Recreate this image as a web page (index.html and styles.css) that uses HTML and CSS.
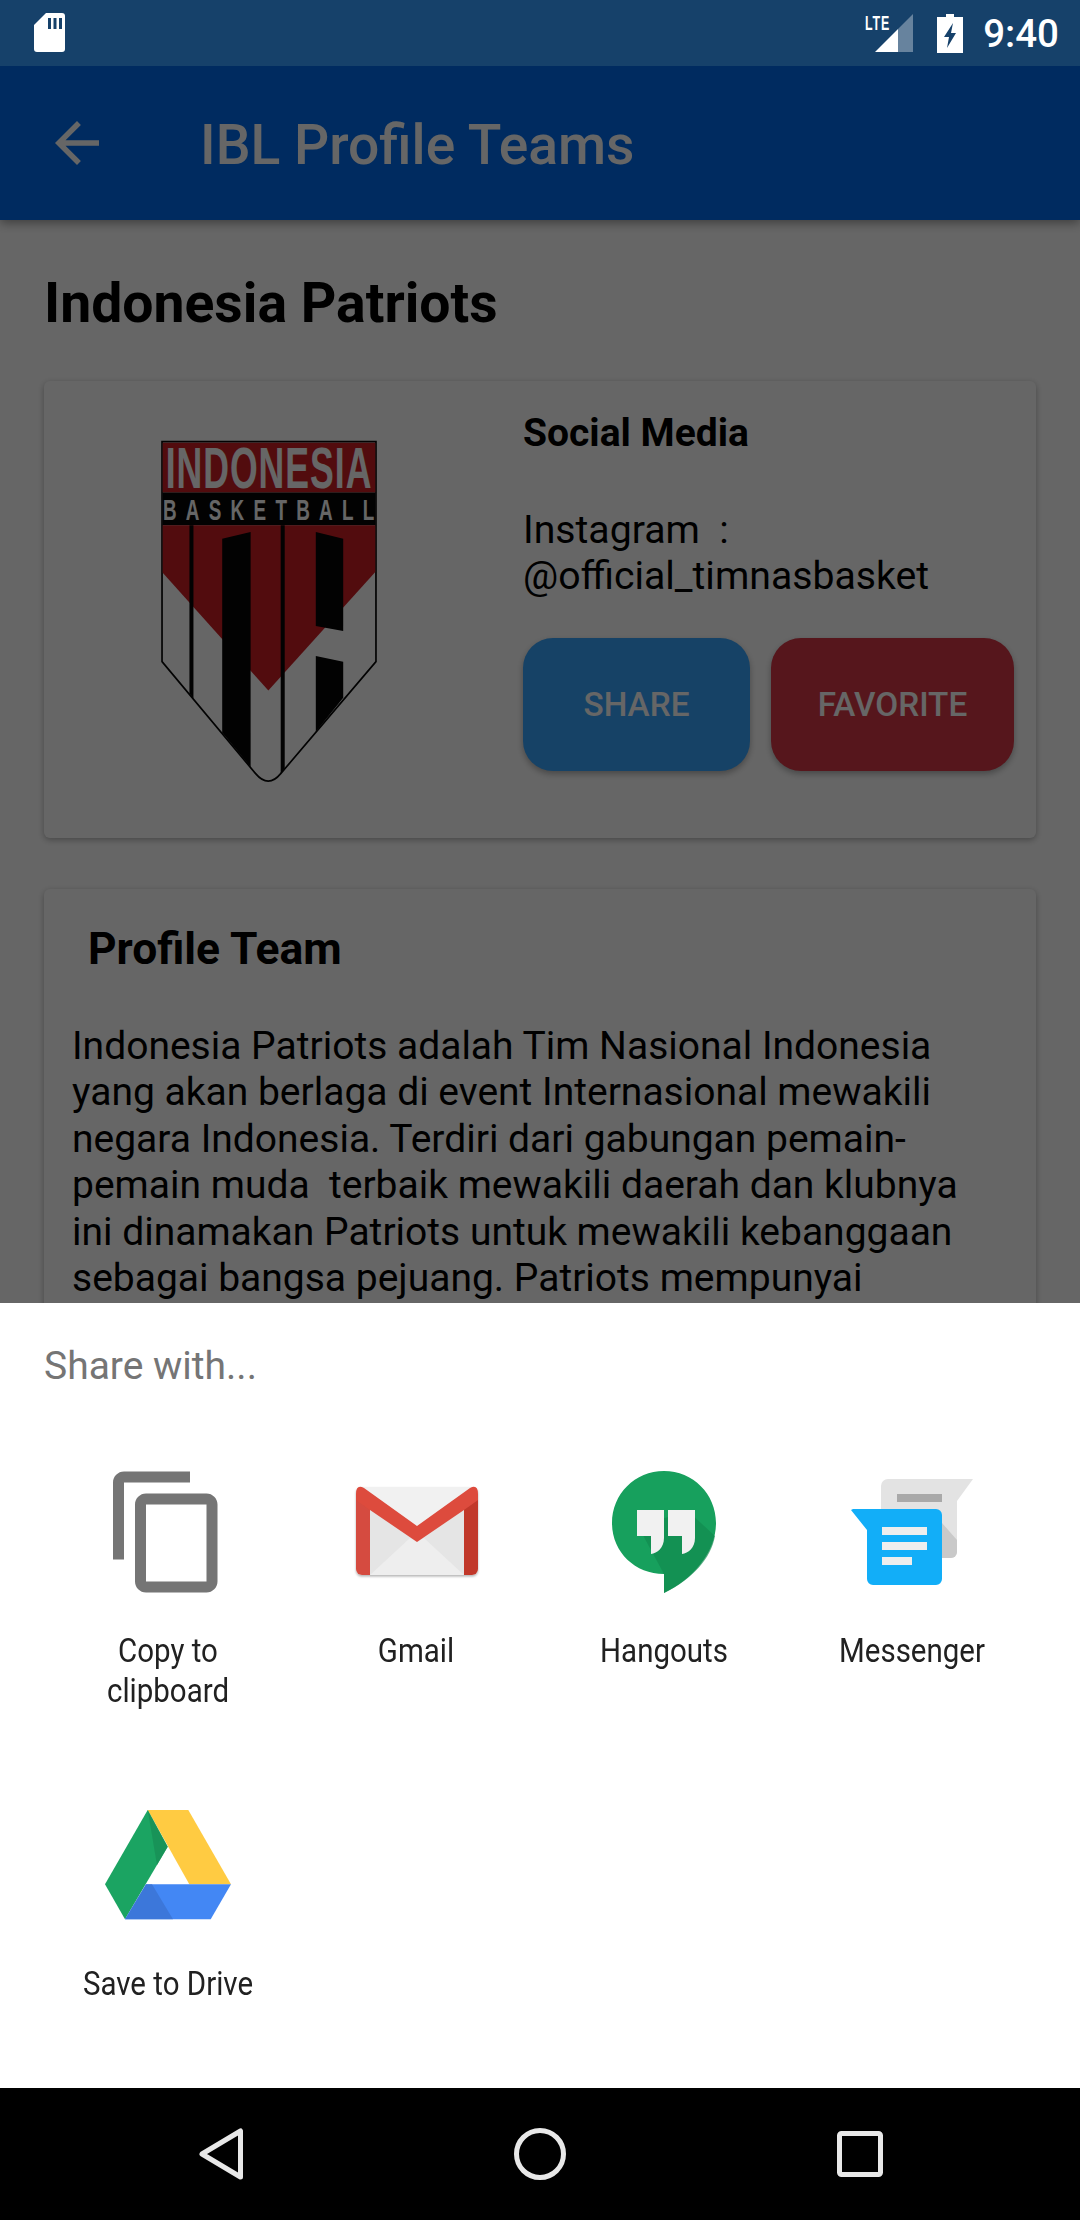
FILE: index.html
```html
<!DOCTYPE html>
<html>
<head>
    <link rel="stylesheet" href="styles.css">
</head>
<body>

<div class="phone">

    <div class="status-bar">
        <svg class="sd-icon" width="31" height="39" viewBox="0 0 31 39">
            <path d="M12 0H28a3 3 0 0 1 3 3V36a3 3 0 0 1-3 3H3a3 3 0 0 1-3-3V12z" fill="#fff"/>
            <path d="M14 5h3v11h-3zM19.500 5h3v11h-3zM25 5h3v11h-3z" fill="#16416a"/>
        </svg>
        <div class="status-right">
            <svg width="50" height="40" viewBox="0 0 50 40">
                <text transform="scale(0.62,1)" x="0" y="17" class="lte-text" textLength="39" lengthAdjust="spacing">LTE</text>
                <path d="M10 39L33 16V39z" fill="#fff"/>
                <path d="M33 16L48 1V39H33z" fill="#fff" opacity=".35"/>
            </svg>
            <svg class="battery" width="26" height="39" viewBox="0 0 26 39">
                <path d="M9 0h8v3h9v36H0V3h9z" fill="#fff"/>
                <path d="M16 9L7 23h5l-2 11 9-15h-5l2-10z" fill="#16416a"/>
            </svg>
            <span class="clock">9:40</span>
        </div>
    </div>

    <div class="screen">

        <div class="app-bar">
            <svg class="back-arrow" width="66" height="66" viewBox="0 0 24 24">
                <path d="M20 11H7.830l5.590-5.590L12 4l-8 8 8 8 1.410-1.410L7.830 13H20v-2z" fill="#fff"/>
            </svg>
            <span class="app-title">IBL Profile Teams</span>
        </div>

        <div class="content">
            <h1 class="team-name">Indonesia Patriots</h1>

            <div class="card team-card">
                <div class="logo-box">
                    <svg width="216" height="353" viewBox="122 60 646 1056">
                        <path d="M125 92H765V750L480 1085Q443 1130 405 1085L125 750z" fill="#fff" stroke="#050505" stroke-width="5"/>
                        <path d="M127 95H763V244H127z" fill="#cd1e25"/>
                        <path d="M127 244H763V342H127z" fill="#050505"/>
                        <path d="M127 342H763V482L443 836L127 484z" fill="#cd1e25"/>
                        <text transform="scale(0.62,1)" x="219" y="232" class="logo-big" textLength="993" lengthAdjust="spacing">INDONESIA</text>
                        <text transform="scale(0.62,1)" x="206" y="327" class="logo-small" textLength="1020" lengthAdjust="spacing">BASKETBALL</text>
                        <path d="M207 342H219V860L207 845z" fill="#050505"/>
                        <path d="M480 342H492V1070L480 1085z" fill="#050505"/>
                        <path d="M305 382L390 362V1065L305 962z" fill="#050505"/>
                        <path d="M585 362L667 382V658L585 643z" fill="#050505"/>
                        <path d="M585 733L667 750V858L585 960z" fill="#050505"/>
                    </svg>
                </div>
                <div class="team-info">
                    <h3 class="card-title">Social Media</h3>
                    <p class="social-text">Instagram&nbsp; :<br>@official_timnasbasket</p>
                    <div class="btn-row">
                        <button class="btn btn-share">SHARE</button>
                        <button class="btn btn-favorite">FAVORITE</button>
                    </div>
                </div>
            </div>

            <div class="card profile-card">
                <h3 class="card-title profile-title">Profile Team</h3>
                <p class="profile-text">Indonesia Patriots adalah Tim Nasional Indonesia yang akan berlaga di event Internasional mewakili negara Indonesia. Terdiri dari gabungan pemain-pemain muda&nbsp; terbaik mewakili daerah dan klubnya ini dinamakan Patriots untuk mewakili kebanggaan sebagai bangsa pejuang. Patriots mempunyai</p>
            </div>
        </div>

        <div class="scrim"></div>

        <div class="share-sheet">
            <div class="sheet-title">Share with...</div>
            <div class="share-grid">

                <div class="share-item">
                    <svg width="132" height="132" viewBox="0 0 24 24">
                        <path d="M16 1H4c-1.100 0-2 .9-2 2v14h2V3h12V1zm3 4H8c-1.100 0-2 .9-2 2v14c0 1.100.9 2 2 2h11c1.100 0 2-.9 2-2V7c0-1.100-.9-2-2-2zm0 16H8V7h11v14z" fill="#757575"/>
                    </svg>
                    <span class="share-label">Copy to clipboard</span>
                </div>

                <div class="share-item">
                    <svg width="132" height="132" viewBox="0 0 132 132">
                        <defs>
                            <filter id="soft" x="-10%" y="-10%" width="120%" height="125%">
                                <feDropShadow dx="0" dy="1.500" stdDeviation="1" flood-color="#000" flood-opacity=".3"/>
                            </filter>
                        </defs>
                        <g filter="url(#soft)">
                            <rect x="6" y="21" width="122" height="88" rx="7" fill="#f1f1f1"/>
                            <path d="M20 38L67 76L114 38V109H20z" fill="#e5e5e5"/>
                            <path d="M20 109L60 72L67 76L74 72L114 109z" fill="#eeeeee"/>
                            <path d="M20 109H12a6 6 0 0 1-6-6V28L20 38z" fill="#d54c3f"/>
                            <path d="M114 109H122a6 6 0 0 0 6-6V28L114 38z" fill="#c1392b"/>
                            <path d="M6 28Q6 18 14 22L67 60L120 22Q128 18 128 28V34L114 44L67 76L20 44L6 34z" fill="#dd4b3e"/>
                        </g>
                    </svg>
                    <span class="share-label">Gmail</span>
                </div>

                <div class="share-item">
                    <svg width="132" height="132" viewBox="0 0 132 132">
                        <path d="M66 5C37 5 14 28 14 57C14 86 37 108 66 108V127C95 113 118 86 118 57C118 28 95 5 66 5z" fill="#17a05d"/>
                        <path d="M40 60L66 108V127C95 113 113 92 117 70L90 45z" fill="#128a50" opacity=".7"/>
                        <path d="M39 44H66V72C66 82 59 87 53 88V70H39z" fill="#f1f1f1"/>
                        <path d="M70 44H97V72C97 82 90 87 84 88V70H70z" fill="#f1f1f1"/>
                    </svg>
                    <span class="share-label">Hangouts</span>
                </div>

                <div class="share-item">
                    <svg width="132" height="132" viewBox="0 0 132 132">
                        <path d="M42 13H127L111 35V86a6 6 0 0 1-6 6H41a6 6 0 0 1-6-6V20a7 7 0 0 1 7-7z" fill="#e3e3e3"/>
                        <path d="M96 57L111 74V86a6 6 0 0 1-6 6H96z" fill="#c9c9c9"/>
                        <rect x="51" y="28" width="45" height="8" fill="#a9a9a9"/>
                        <path d="M7 43H90a6 6 0 0 1 6 6V113a6 6 0 0 1-6 6H27a6 6 0 0 1-6-6V64L5 44z" fill="#12aef8"/>
                        <rect x="36" y="61" width="45" height="8" fill="#eeeeee"/>
                        <rect x="36" y="76" width="45" height="8" fill="#eeeeee"/>
                        <rect x="36" y="91" width="30" height="8" fill="#eeeeee"/>
                    </svg>
                    <span class="share-label">Messenger</span>
                </div>

                <div class="share-item">
                    <svg width="132" height="132" viewBox="0 0 132 132">
                        <path d="M45.700 11H86.300L129 85.300H87.300z" fill="#ffcb42"/>
                        <path d="M45.700 11L3 85.300L23 120.300L65.700 47.700z" fill="#1ba462"/>
                        <path d="M45.700 11L65.700 47.700L55 66z" fill="#188f56" opacity=".8"/>
                        <path d="M44 85.300H129L108.700 120.300H23z" fill="#4387f4"/>
                        <path d="M44 85.300H50L71 120.300H23z" fill="#3b73d3" opacity=".8"/>
                    </svg>
                    <span class="share-label">Save to Drive</span>
                </div>

            </div>
        </div>

    </div>

    <div class="nav-bar">
        <svg width="52" height="60" viewBox="0 0 52 60">
            <path d="M45.500 7V53L7 30z" fill="none" stroke="#e8e8e8" stroke-width="5" stroke-linejoin="round"/>
        </svg>
        <svg width="52" height="52" viewBox="0 0 52 52">
            <circle cx="26" cy="26" r="23.500" fill="none" stroke="#e8e8e8" stroke-width="5"/>
        </svg>
        <svg width="46" height="46" viewBox="0 0 46 46">
            <rect x="2.500" y="2.500" width="41" height="41" rx="2" fill="none" stroke="#e8e8e8" stroke-width="5"/>
        </svg>
    </div>

</div>

</body>
</html>
```
FILE: styles.css
```css
* {
    box-sizing: border-box;
}

body {
    margin: 0;
    font-family: Roboto, "Noto Sans", sans-serif;
    color: #000;
    background-color: #000;
}

h1, h3, p {
    margin: 0;
}

.phone {
    width: 1080px;
    height: 2220px;
    display: flex;
    flex-direction: column;
    overflow: hidden;
}

/* status bar */
.status-bar {
    height: 66px;
    flex-shrink: 0;
    display: flex;
    justify-content: space-between;
    align-items: center;
    padding: 0 21px 0 34px;
    background-color: #16416a;
}

.sd-icon {
    margin-top: -1px;
}

.status-right {
    display: flex;
    align-items: center;
}

.lte-text {
    font-family: "Liberation Sans", sans-serif;
    font-size: 20px;
    font-weight: 700;
    fill: #fff;
}

.battery {
    margin-left: 22px;
}

.clock {
    margin-left: 20px;
    font-size: 38.500px;
    font-weight: 500;
    color: #fff;
}

/* page under the scrim */
.screen {
    flex: 1;
    position: relative;
    overflow: hidden;
    background-color: #fff;
}

.app-bar {
    height: 154px;
    display: flex;
    align-items: center;
    padding-left: 44px;
    background-color: #006cf0;
    box-shadow: 0 3px 10px rgba(0, 0, 0, 0.4);
    position: relative;
}

.app-title {
    margin-left: 90px;
    padding-top: 4px;
    font-size: 55.200px;
    font-weight: 500;
    color: #fff;
}

.content {
    padding: 0 44px;
}

.team-name {
    padding-top: 51px;
    font-size: 55.300px;
    line-height: 66px;
    font-weight: 700;
}

.card {
    background-color: #fff;
    border-radius: 6px;
    box-shadow: 0 2px 6px rgba(0, 0, 0, 0.3);
}

.team-card {
    height: 457px;
    margin-top: 44px;
    display: flex;
}

.logo-box {
    width: 479px;
    padding: 50px 0 0 117px;
}

.card-title {
    font-size: 39px;
    line-height: 46px;
    font-weight: 700;
}

.team-info {
    padding-top: 29px;
}

.social-text {
    margin-top: 51px;
    font-size: 39.200px;
    line-height: 46px;
}

.btn-row {
    display: flex;
    gap: 21px;
    margin-top: 39px;
}

.btn {
    height: 133px;
    border: none;
    border-radius: 30px;
    font-family: Roboto, sans-serif;
    font-size: 33.300px;
    font-weight: 500;
    color: #fff;
    box-shadow: 0 3px 6px rgba(0, 0, 0, 0.3);
}

.btn-share {
    width: 227px;
    background-color: #37a5ff;
}

.btn-favorite {
    width: 243px;
    background-color: #d73746;
}

.profile-card {
    height: 1000px;
    margin-top: 51px;
    padding: 37px 40px 0 28px;
}

.profile-title {
    padding-left: 16px;
    font-size: 44.400px;
}

.profile-text {
    margin-top: 51px;
    font-size: 39px;
    line-height: 46.400px;
}

.scrim {
    position: absolute;
    top: 0;
    left: 0;
    right: 0;
    bottom: 0;
    background-color: rgba(0, 0, 0, 0.6);
}

/* share sheet */
.share-sheet {
    position: absolute;
    left: 0;
    right: 0;
    bottom: 0;
    height: 785px;
    padding: 0 44px;
    background-color: #fff;
}

.sheet-title {
    padding-top: 40px;
    font-size: 39px;
    line-height: 46px;
    color: #757575;
}

.share-grid {
    display: grid;
    grid-template-columns: repeat(4, 248px);
    grid-auto-rows: 333px;
    margin-top: 77px;
}

.share-item {
    display: flex;
    flex-direction: column;
    align-items: center;
}

.share-label {
    width: 210px;
    margin-top: 33px;
    font-size: 33.500px;
    line-height: 40px;
    text-align: center;
    color: #212121;
    transform: scaleX(0.88);
}

/* nav bar */
.nav-bar {
    height: 132px;
    flex-shrink: 0;
    display: flex;
    align-items: center;
    padding-left: 195px;
    background-color: #000;
}

.nav-bar svg:nth-child(2) {
    margin-left: 267px;
}

.nav-bar svg:nth-child(3) {
    margin-left: 271px;
}

.logo-big {
    font-family: "Liberation Sans", sans-serif;
    font-size: 172px;
    font-weight: 700;
    fill: #fff;
}

.logo-small {
    font-family: "Liberation Sans", sans-serif;
    font-size: 91px;
    font-weight: 700;
    fill: #fff;
}
```
